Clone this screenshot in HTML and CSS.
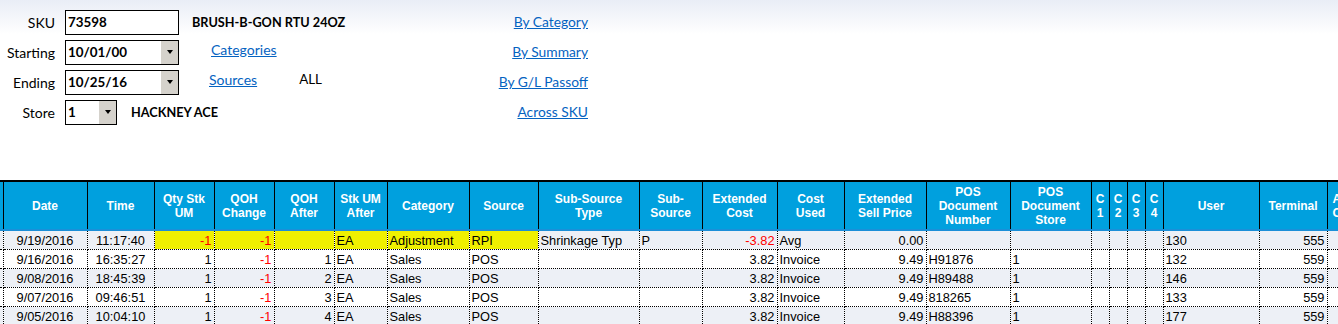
FILE: index.html
```html
<!DOCTYPE html>
<html>
<head>
<meta charset="utf-8">
<link rel="stylesheet" href="styles.css">
</head>
<body>
<div class="top">
  <div class="form">
    <div class="row">
      <span class="lbl">SKU</span>
      <div class="box w-sku"><span class="val">73598</span></div>
      <span class="desc d-sku">BRUSH-B-GON RTU 24OZ</span>
    </div>
    <div class="row">
      <span class="lbl">Starting</span>
      <div class="box w-sku"><span class="val">10/01/00</span><span class="btn"><i class="tri"></i></span></div>
      <a class="link l-cat" href="#">Categories</a>
    </div>
    <div class="row">
      <span class="lbl">Ending</span>
      <div class="box w-sku"><span class="val">10/25/16</span><span class="btn"><i class="tri"></i></span></div>
      <a class="link l-src" href="#">Sources</a>
      <span class="all">ALL</span>
    </div>
    <div class="row">
      <span class="lbl">Store</span>
      <div class="box w-store"><span class="val">1</span><span class="btn"><i class="tri"></i></span></div>
      <span class="desc d-store">HACKNEY ACE</span>
    </div>
  </div>
  <div class="links">
    <div class="lrow"><a class="link" href="#">By Category</a></div>
    <div class="lrow"><a class="link" href="#">By Summary</a></div>
    <div class="lrow"><a class="link" href="#">By G/L Passoff</a></div>
    <div class="lrow"><a class="link" href="#">Across SKU</a></div>
  </div>
</div>

<table class="grid">
  <colgroup>
    <col style="width:3px"><col style="width:84px"><col style="width:67px"><col style="width:60px"><col style="width:60px"><col style="width:60px"><col style="width:53px"><col style="width:82px"><col style="width:69px"><col style="width:101px"><col style="width:63px"><col style="width:75px"><col style="width:67px"><col style="width:82px"><col style="width:84px"><col style="width:81px"><col style="width:18px"><col style="width:18px"><col style="width:18px"><col style="width:18px"><col style="width:96px"><col style="width:68px"><col style="width:38px">
  </colgroup>
  <thead>
    <tr>
      <th></th><th>Date</th><th>Time</th><th>Qty Stk<br>UM</th><th>QOH<br>Change</th><th>QOH<br>After</th><th>Stk UM<br>After</th><th>Category</th><th>Source</th><th>Sub-Source<br>Type</th><th>Sub-<br>Source</th><th>Extended<br>Cost</th><th>Cost<br>Used</th><th>Extended<br>Sell Price</th><th>POS<br>Document<br>Number</th><th>POS<br>Document<br>Store</th><th>C<br>1</th><th>C<br>2</th><th>C<br>3</th><th>C<br>4</th><th>User</th><th>Terminal</th><th class="lastc">Avg<br>Cost</th>
    </tr>
  </thead>
  <tbody>
    <tr class="alt">
      <td></td><td class="c">9/19/2016</td><td class="c">11:17:40</td><td class="r hl neg">-1</td><td class="r hl neg">-1</td><td class="r hl"></td><td class="hl">EA</td><td class="hl">Adjustment</td><td class="hl">RPI</td><td>Shrinkage Typ</td><td>P</td><td class="r neg">-3.82</td><td>Avg</td><td class="r">0.00</td><td></td><td></td><td></td><td></td><td></td><td></td><td>130</td><td class="r">555</td><td></td>
    </tr>
    <tr>
      <td></td><td class="c">9/16/2016</td><td class="c">16:35:27</td><td class="r">1</td><td class="r neg">-1</td><td class="r">1</td><td>EA</td><td>Sales</td><td>POS</td><td></td><td></td><td class="r">3.82</td><td>Invoice</td><td class="r">9.49</td><td>H91876</td><td>1</td><td></td><td></td><td></td><td></td><td>132</td><td class="r">559</td><td></td>
    </tr>
    <tr class="alt">
      <td></td><td class="c">9/08/2016</td><td class="c">18:45:39</td><td class="r">1</td><td class="r neg">-1</td><td class="r">2</td><td>EA</td><td>Sales</td><td>POS</td><td></td><td></td><td class="r">3.82</td><td>Invoice</td><td class="r">9.49</td><td>H89488</td><td>1</td><td></td><td></td><td></td><td></td><td>146</td><td class="r">559</td><td></td>
    </tr>
    <tr>
      <td></td><td class="c">9/07/2016</td><td class="c">09:46:51</td><td class="r">1</td><td class="r neg">-1</td><td class="r">3</td><td>EA</td><td>Sales</td><td>POS</td><td></td><td></td><td class="r">3.82</td><td>Invoice</td><td class="r">9.49</td><td>818265</td><td>1</td><td></td><td></td><td></td><td></td><td>133</td><td class="r">559</td><td></td>
    </tr>
    <tr class="alt">
      <td></td><td class="c">9/05/2016</td><td class="c">10:04:10</td><td class="r">1</td><td class="r neg">-1</td><td class="r">4</td><td>EA</td><td>Sales</td><td>POS</td><td></td><td></td><td class="r">3.82</td><td>Invoice</td><td class="r">9.49</td><td>H88396</td><td>1</td><td></td><td></td><td></td><td></td><td>177</td><td class="r">559</td><td></td>
    </tr>
  </tbody>
</table>
</body>
</html>
```

FILE: styles.css
```css
html, body {
  margin: 0;
  padding: 0;
  overflow: hidden;
  background: #ffffff;
}
body {
  width: 1338px;
  height: 324px;
  background: linear-gradient(to bottom, #e9edf6 0px, #f6f7fb 20px, #ffffff 34px);
}
.top {
  display: flex;
  padding-top: 7px;
  font-family: Lato, "Liberation Sans", sans-serif;
  font-size: 14px;
  color: #000;
}
.form {
  width: 400px;
}
.row {
  height: 30px;
  display: flex;
  align-items: center;
}
.lbl {
  width: 55px;
  text-align: right;
  margin-right: 10px;
}
.box {
  border: 1px solid #000;
  background: #fff;
  display: flex;
  align-items: center;
  box-sizing: border-box;
  height: 25px;
}
.w-sku { width: 114px; }
.w-store { width: 52px; }
.val {
  flex: 1;
  padding-left: 2px;
  font-weight: bold;
  font-size: 13.4px;
}
.btn {
  width: 17px;
  align-self: stretch;
  background: #d5d2cc;
  display: flex;
  align-items: center;
  justify-content: center;
}
.tri {
  width: 0;
  height: 0;
  border-left: 3.5px solid transparent;
  border-right: 3.5px solid transparent;
  border-top: 4px solid #000;
}
.desc {
  font-weight: bold;
  font-size: 12.7px;
}
.d-sku { margin-left: 13px; }
.d-store { margin-left: 14px; }
.link {
  color: #0563c1;
  text-decoration: underline;
}
.l-cat { margin-left: 32px; position: relative; top: -3px; }
.l-src { margin-left: 30px; position: relative; top: -3px; }
.all { margin-left: 42px; position: relative; top: -3px; font-size: 13.4px; }
.links {
  width: 188px;
  text-align: right;
}
.lrow {
  height: 30px;
  line-height: 30px;
  font-size: 13.8px;
}

.grid {
  margin-top: 53px;
  border-collapse: collapse;
  table-layout: fixed;
  width: 1365px;
  font-family: "Liberation Sans", Arial, sans-serif;
}
.grid th {
  background: #00a0de;
  color: #fff;
  font-size: 12px;
  font-weight: bold;
  line-height: 14px;
  height: 47px;
  padding: 0 1px;
  border-left: 1px solid #000;
  border-right: 1px solid #000;
  border-top: 2px solid #000;
  border-bottom: 2px solid #1b8fd8;
  text-align: center;
  vertical-align: middle;
  overflow: hidden;
  white-space: nowrap;
}
.grid th:first-child { border-left: none; }
.grid th.lastc { text-align: left; padding-left: 5px; }
.grid td {
  font-size: 12.8px;
  height: 18px;
  padding: 0 2px;
  border: 1px dotted #000;
  white-space: nowrap;
  overflow: hidden;
  color: #000;
  background: #fff;
}
.grid td:first-child { border-left: none; }
.grid tr.alt td { background: #edf0f6; }
.grid tr.alt td.hl, .grid td.hl { background: #f0f000; }
.c { text-align: center; }
.r { text-align: right; }
.neg { color: #ff0000 !important; }
```
